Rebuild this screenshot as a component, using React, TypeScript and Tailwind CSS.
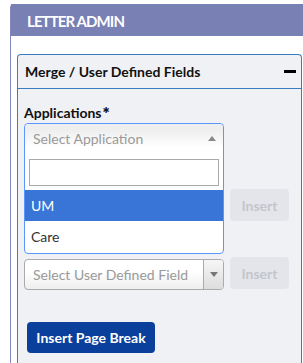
const FONT = "font-['Lato','Liberation_Sans',sans-serif]";

function InsertButton() {
  return (
    <button
      disabled
      className="w-[59px] h-[32px] shrink-0 rounded-[4px] bg-[#e4e5ea] text-[14px] font-bold text-[#c3c5cb] flex items-center justify-center"
    >
      Insert
    </button>
  );
}

export default function App() {
  return (
    <div className={`w-[303px] h-[363px] overflow-hidden bg-white pl-[10px] pt-[4px] ${FONT}`}>
      <div className="h-full flex flex-col rounded-tl-[4px] border-l border-[#8088bc]">
        <div className="h-[32px] shrink-0 bg-[#7880b4] flex items-center pl-[16px] pt-[3px] text-white font-bold text-[15px] tracking-[-0.9px]">
          LETTER ADMIN
        </div>

        <div className="flex-1 flex flex-col bg-white pt-[18px] pl-[6px] pr-[1px]">
          <div className="flex-1 flex flex-col rounded-t-[4px] border border-b-0 border-[#3a7cc0] bg-[#f0f1f4]">
            <div className="h-[34px] shrink-0 border-b border-[#3a7cc0] flex items-center justify-between pl-[7px] pr-[5px]">
              <span className="text-[14px] font-bold text-[#111]">Merge / User Defined Fields</span>
              <span className="w-[12px] h-[3px] bg-black" />
            </div>

            <div className="flex flex-col pl-[6px] pt-[15px]">
              <label className="h-[17px] text-[14px] leading-[17px] font-bold text-[#111] mb-[2px]">
                Applications
                <span className="ml-[1px] text-[17px] leading-[0] font-extrabold relative top-[2px]">*</span>
              </label>

              {/* open chosen dropdown */}
              <div className="relative h-[31px] w-[200px]">
                <div className="absolute top-0 left-0 z-10 w-[200px] rounded-[4px] border border-[#5897fb] bg-white">
                  <div className="h-[29px] rounded-t-[4px] bg-[linear-gradient(#eee_20%,#fff_80%)] flex items-center justify-between pl-[8px] pr-[7px]">
                    <span className="text-[14px] text-[#999]">Select Application</span>
                    <svg width="8" height="5" viewBox="0 0 8 5">
                      <path d="M0 5 L4 0 L8 5 Z" fill="#888" />
                    </svg>
                  </div>
                  <div className="pt-[6px] pb-[4px] px-[4px]">
                    <div className="h-[27px] border border-[#aaa] bg-white" />
                  </div>
                  <div className="h-[31px] bg-[#3875d7] text-white text-[14px] flex items-center pl-[6px]">UM</div>
                  <div className="h-[31px] text-[#333] text-[14px] flex items-center pl-[6px] mb-[1px]">Care</div>
                </div>
              </div>

              <div className="flex gap-[6px] mt-[35px]">
                <div className="w-[200px] h-[32px] rounded-[4px] border border-[#aaa] bg-white" />
                <InsertButton />
              </div>

              <div className="flex gap-[6px] mt-[36px] items-start">
                <div className="mt-[2px] w-[200px] h-[31px] rounded-[4px] border border-[#aaa] bg-[linear-gradient(#fff_40%,#eee_100%)] flex overflow-hidden">
                  <span className="flex-1 flex items-center pl-[8px] text-[14px] text-[#999]">
                    Select User Defined Field
                  </span>
                  <span className="w-[20px] border-l border-[#aaa] bg-[linear-gradient(#f6f6f6,#ddd)] flex items-center justify-center">
                    <svg width="8" height="5" viewBox="0 0 8 5">
                      <path d="M0 0 L8 0 L4 5 Z" fill="#777" />
                    </svg>
                  </span>
                </div>
                <InsertButton />
              </div>

              <button className="mt-[32px] ml-[3px] w-[128px] h-[31px] rounded-[4px] bg-[#0a3f9c] text-white text-[14px] font-bold flex items-center justify-center">
                Insert Page Break
              </button>
            </div>
          </div>
        </div>
      </div>
    </div>
  );
}
